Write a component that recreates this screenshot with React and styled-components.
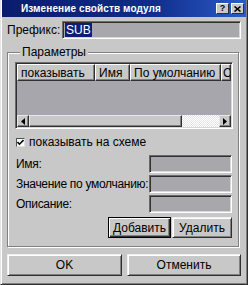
import React from 'react';
import styled, { createGlobalStyle } from 'styled-components';

const Global = createGlobalStyle`
  html, body { margin: 0; padding: 0; background: #c8c8c8; }
  body { font-family: "Liberation Sans", Arial, sans-serif; font-size: 11.5px; color: #000; }
  * { box-sizing: border-box; }
`;

const Window = styled.div`
  width: 248px;
  height: 285px;
  background: #c8c8c8;
  border: 1px solid;
  border-top-width: 0;
  border-color: #e4e4e4 #303030 #303030 #e4e4e4;
  box-shadow: inset 1px 0 0 #fff, inset -1px -1px 0 #808080;
  padding: 0 1px 1px 1px;
  display: flex;
  flex-direction: column;
  overflow: hidden;
`;

const TitleBar = styled.div`
  height: 17px;
  background: linear-gradient(90deg, #0a1c6c 0%, #0f2c88 60%, #2a5cc8 100%);
  display: flex;
  align-items: center;
  justify-content: space-between;
  padding: 0 2px 0 19px;
`;

const Title = styled.span`
  color: #fff;
  font-weight: bold;
  font-size: 10px;
  letter-spacing: 0.1px;
`;

const TitleButtons = styled.div`
  display: flex;
  gap: 2px;
`;

const TitleButton = styled.div`
  width: 13px;
  height: 11px;
  background: #c8c8c8;
  border: 1px solid;
  border-color: #fff #303030 #303030 #fff;
  display: flex;
  align-items: center;
  justify-content: center;
  font-size: 9px;
  font-weight: bold;
  line-height: 1;
  color: #000;
`;

const Body = styled.div`
  flex: 1;
  min-width: 0;
  display: flex;
  flex-direction: column;
  padding: 4px 5px 0 5px;
`;

const PrefixRow = styled.div`
  display: flex;
  align-items: center;
  height: 18px;
`;

const PrefixLabel = styled.span`
  flex: 0 0 55px;
  font-size: 12px;
`;

const Field = styled.div`
  height: 18px;
  min-width: 0;
  background: #a8a8ac;
  border: 1px solid;
  border-color: #6a6a6a #ffffff #ffffff #6a6a6a;
  box-shadow: inset 1px 1px 0 #303030, inset -1px -1px 0 #d8d8d8;
  display: flex;
  align-items: center;
  padding-left: 2px;
  flex: ${p => (p.$grow ? 1 : 'none')};
`;

const Selected = styled.span`
  background: #0a1e78;
  color: #fff;
  font-size: 12px;
  padding: 0 1px;
  line-height: 14px;
`;

const Group = styled.fieldset`
  min-width: 0;
  margin: 6px 2px 0 0;
  padding: 3px 5px 8px 7px;
  border: 1px solid #808080;
  box-shadow: inset 1px 1px 0 #fff, 1px 1px 0 #fff;
  display: flex;
  flex-direction: column;
`;

const Legend = styled.legend`
  padding: 0 2px;
  margin-left: 5px;
  background: #c8c8c8;
  font-size: 12px;
  line-height: 14px;
`;

const ListView = styled.div`
  height: 67px;
  min-width: 0;
  border: 1px solid;
  border-color: #6a6a6a #fff #fff #6a6a6a;
  box-shadow: inset 1px 1px 0 #303030, inset -1px -1px 0 #d8d8d8;
  padding: 1px;
  display: flex;
  flex-direction: column;
  overflow: hidden;
`;

const Header = styled.div`
  display: flex;
  height: 17px;
  flex: none;
  overflow: hidden;
`;

const HeaderCell = styled.div`
  width: ${p => (p.$w ? `${p.$w}px` : 'auto')};
  flex: ${p => (p.$w ? 'none' : '1')};
  min-width: 0;
  background: #c8c8c8;
  border: 1px solid;
  border-color: #fff #303030 #303030 #fff;
  box-shadow: inset -1px -1px 0 #808080;
  padding-left: ${p => (p.$w ? 3 : 1)}px;
  display: flex;
  align-items: center;
  white-space: nowrap;
  overflow: hidden;
  font-size: 12px;
`;

const ListBody = styled.div`
  flex: 1;
  background: #a6a6ac;
`;

const ScrollBar = styled.div`
  height: 12px;
  flex: none;
  display: flex;
  background: repeating-conic-gradient(#e4e4e4 0 25%, #ffffff 0 50%) 0 0 / 2px 2px;
`;

const ScrollBtn = styled.div`
  width: ${p => p.$w}px;
  flex: none;
  background: #c8c8c8;
  border: 1px solid;
  border-color: #e8e8e8 #303030 #303030 #e8e8e8;
  box-shadow: inset -1px -1px 0 #808080;
  display: flex;
  align-items: center;
  justify-content: center;
`;

const Track = styled.div`
  flex: 1;
`;

const CheckRow = styled.label`
  margin-top: 6px;
  height: 14px;
  display: flex;
  align-items: center;
  gap: 4px;
  padding-left: 1px;
  font-size: 12px;
`;

const CheckBox = styled.span`
  width: 9px;
  height: 9px;
  background: #fff;
  border: 1px solid;
  border-color: #505050 #e0e0e0 #e0e0e0 #505050;
  display: flex;
  align-items: center;
  justify-content: center;
`;

const FormGrid = styled.div`
  margin-top: 6px;
  display: grid;
  grid-template-columns: 1fr 83px;
  grid-auto-rows: 18px;
  row-gap: 2px;
  padding-right: 1px;
`;

const FormLabel = styled.span`
  display: flex;
  align-items: center;
  padding-left: 1px;
  font-size: 12px;
  white-space: nowrap;
  letter-spacing: -0.3px;
`;

const ButtonRow = styled.div`
  margin-top: 4px;
  display: flex;
  justify-content: flex-end;
  gap: 1px;
  padding-right: 1px;
`;

const Button = styled.button`
  width: ${p => p.$w}px;
  height: ${p => p.$h}px;
  font-family: "Liberation Sans", Arial, sans-serif;
  font-size: 12px;
  color: #000;
  background: #c8c8c8;
  padding: 0;
  border: 1px solid;
  border-color: ${p => (p.$default ? '#000' : '#f0f0f0 #303030 #303030 #f0f0f0')};
  box-shadow: ${p =>
    p.$default
      ? 'inset 1px 1px 0 #fff, inset -1px -1px 0 #303030, inset -2px -2px 0 #808080'
      : 'inset 1px 1px 0 #fff, inset -1px -1px 0 #808080'};
`;

const BottomRow = styled.div`
  margin-top: 7px;
  display: grid;
  grid-template-columns: 115px 114px;
  column-gap: 5px;
`;

const Arrow = ({ dir }) => (
  <svg width="4" height="7" viewBox="0 0 4 7">
    {dir === 'left' ? <path d="M4 0 L0 3.5 L4 7 Z" fill="#000" /> : <path d="M0 0 L4 3.5 L0 7 Z" fill="#000" />}
  </svg>
);

export default function App() {
  return (
    <>
      <Global />
      <Window>
        <TitleBar>
          <Title>Изменение свойств модуля</Title>
          <TitleButtons>
            <TitleButton>?</TitleButton>
            <TitleButton>
              <svg width="7" height="6" viewBox="0 0 7 6">
                <path d="M0.5 0.5 L6.5 5.5 M6.5 0.5 L0.5 5.5" stroke="#000" strokeWidth="1.6" />
              </svg>
            </TitleButton>
          </TitleButtons>
        </TitleBar>
        <Body>
          <PrefixRow>
            <PrefixLabel>Префикс:</PrefixLabel>
            <Field $grow>
              <Selected>SUB</Selected>
            </Field>
          </PrefixRow>
          <Group>
            <Legend>Параметры</Legend>
            <ListView>
              <Header>
                <HeaderCell $w={78}>показывать</HeaderCell>
                <HeaderCell $w={35}>Имя</HeaderCell>
                <HeaderCell $w={91}>По умолчанию</HeaderCell>
                <HeaderCell>С</HeaderCell>
              </Header>
              <ListBody />
              <ScrollBar>
                <ScrollBtn $w={12}><Arrow dir="left" /></ScrollBtn>
                <ScrollBtn $w={153} />
                <Track />
                <ScrollBtn $w={12}><Arrow dir="right" /></ScrollBtn>
              </ScrollBar>
            </ListView>
            <CheckRow>
              <CheckBox>
                <svg width="7" height="7" viewBox="0 0 7 7">
                  <path d="M0.5 3 L2.5 5.2 L6.5 1" stroke="#000" strokeWidth="1.6" fill="none" />
                </svg>
              </CheckBox>
              показывать на схеме
            </CheckRow>
            <FormGrid>
              <FormLabel>Имя:</FormLabel>
              <Field />
              <FormLabel>Значение по умолчанию:</FormLabel>
              <Field />
              <FormLabel>Описание:</FormLabel>
              <Field />
            </FormGrid>
            <ButtonRow>
              <Button $w={63} $h={21} $default>Добавить</Button>
              <Button $w={60} $h={21}>Удалить</Button>
            </ButtonRow>
          </Group>
          <BottomRow>
            <Button $w={115} $h={22}>OK</Button>
            <Button $w={114} $h={22}>Отменить</Button>
          </BottomRow>
        </Body>
      </Window>
    </>
  );
}
